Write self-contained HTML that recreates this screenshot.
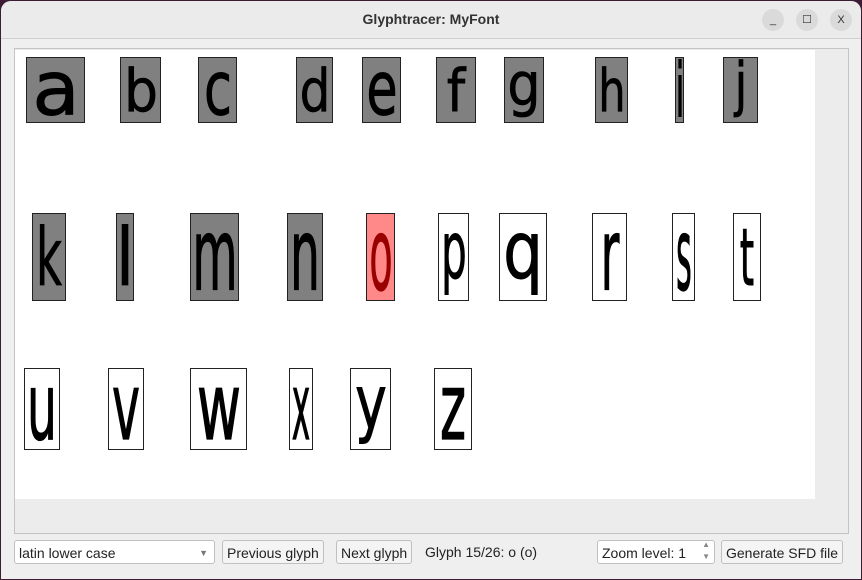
<!DOCTYPE html><html><head><style>
body{margin:0;width:862px;height:580px;background:#3d1c35;font-family:"Liberation Sans",sans-serif;overflow:hidden;position:relative}
.win{position:absolute;left:1px;top:1px;width:860px;height:578px;background:#efefef;border-radius:10px 10px 0 0}
.title{position:absolute;left:0;top:0;width:860px;height:37px;background:#ebebeb;border-bottom:1px solid #cfcfcf;border-radius:10px 10px 0 0;text-align:center;line-height:37px;font-weight:bold;font-size:14px;color:#333}
.wb{position:absolute;top:8px;width:22px;height:22px;border-radius:11px;background:#dadada;font-size:11px;line-height:22px;text-align:center;color:#333;font-weight:normal}
.frame{position:absolute;left:14px;top:48px;width:833px;height:484px;border:1px solid #c4c4c4;background:#ececec}
.canvas{position:absolute;left:15px;top:50px;width:800px;height:449px;background:#fff}
.g{position:absolute;border:1px solid #222;background:#808080;box-sizing:border-box;overflow:hidden;color:#000}
.g span{position:absolute;left:50%;top:50%;font-family:"DejaVu Sans",sans-serif;font-size:40px;line-height:40px;-webkit-text-stroke:0.5px currentColor}
.btn{position:absolute;top:540px;height:24px;border:1px solid #c0c0c0;border-radius:3px;background:#f4f4f4;font-size:14px;line-height:24px;padding:0 4px;box-sizing:border-box;color:#222}
.lbl{position:absolute;top:540px;font-size:14px;line-height:24px;color:#222}
</style></head><body><div class="win">
<div class="title">Glyphtracer: MyFont
<div class="wb" style="left:761px">_</div><div class="wb" style="left:795px">☐</div><div class="wb" style="left:829px">X</div></div>
</div>
<div class="frame"></div>
<div class="canvas"></div>
<div id="gl"></div>
<div class="btn" style="left:14px;width:201px;background:#fff">latin lower case<span style="position:absolute;right:6px;font-size:9px;color:#777">▼</span></div>
<div class="btn" style="left:222px">Previous glyph</div>
<div class="btn" style="left:336px">Next glyph</div>
<div class="lbl" style="left:425px">Glyph 15/26: o (o)</div>
<div class="btn" style="left:597px;width:118px;background:#fff">Zoom level: 1<span style="position:absolute;right:4px;top:-2px;font-size:8px;line-height:12px;color:#888">▲<br>▼</span></div>
<div class="btn" style="left:721px">Generate SFD file</div>
<script>
var d=[["a",26,84,57,122,0],["b",120,160,57,122,0],["c",198,236,57,122,0],["d",296,332,57,122,0],["e",362,400,57,122,0],["f",436,475,57,122,0],["g",504,543,57,122,0],["h",595,627,57,122,0],["i",675,683,57,122,0],["j",723,757,57,122,0],
["k",32,65,213,300,0],["l",116,133,213,300,0],["m",190,238,213,300,0],["n",287,322,213,300,0],["o",366,394,213,300,2],["p",438,468,213,300,1],["q",499,546,213,300,1],["r",592,626,213,300,1],["s",672,694,213,300,1],["t",733,760,213,300,1],
["u",24,59,368,449,1],["v",108,143,368,449,1],["w",190,246,368,449,1],["x",289,312,368,449,1],["y",350,390,368,449,1],["z",434,471,368,449,1]];
var h="";d.forEach(function(x){var w=x[2]-x[1]+1,H=x[4]-x[3]+1,bg=x[5]==0?"#808080":x[5]==1?"#fff":"#f88",col=x[5]==2?"#900":"#000";
var sx=(w*0.85)/26,sy=(H*0.85)/30;if(x[0]=="i"||x[0]=="l")sx=w*0.9/10;if(x[0]=="m"||x[0]=="w")sx=w*0.85/36;
var ty="-50%";if("bdfhklt".indexOf(x[0])>=0){sy=H*0.9/40;}if("gjpqy".indexOf(x[0])>=0){sy=H*0.9/40;ty="-62%";}if("bdfhklti".indexOf(x[0])>=0)ty="-44%";
h+='<div class="g" style="left:'+x[1]+'px;top:'+x[3]+'px;width:'+w+'px;height:'+H+'px;background:'+bg+';color:'+col+'"><span style="transform:translate(-50%,'+ty+') scale('+sx.toFixed(2)+','+sy.toFixed(2)+')">'+x[0]+'</span></div>'});
document.getElementById("gl").innerHTML=h;
</script></body></html>
